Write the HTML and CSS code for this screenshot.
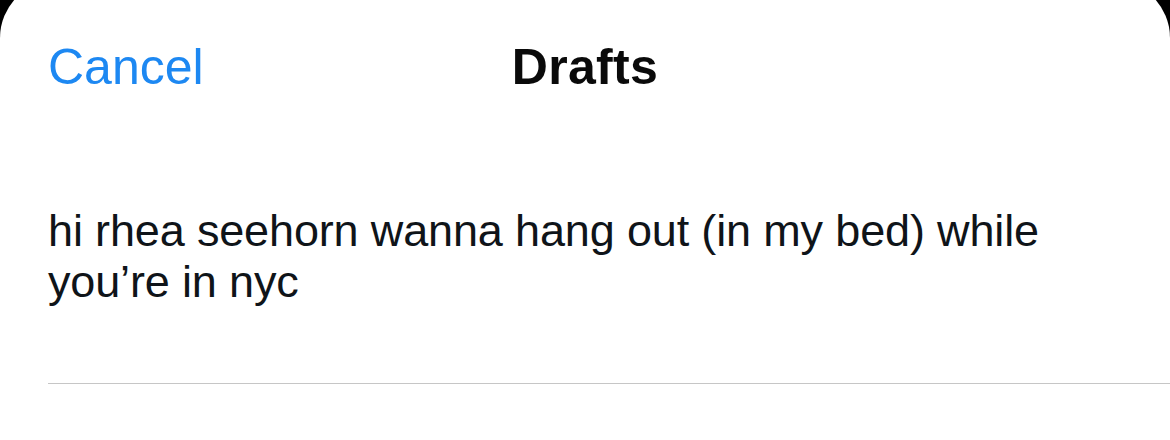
FILE: index.html
```html
<!DOCTYPE html>
<html lang="en">
<head>
<meta charset="utf-8">
<title>Drafts</title>
<link rel="stylesheet" href="styles.css">
</head>
<body>
<div class="sheet">
  <header class="nav">
    <span class="cancel">Cancel</span>
    <h1 class="title">Drafts</h1>
    <span class="spacer"></span>
  </header>
  <ul class="drafts">
    <li class="draft">
      <p class="draft-text">hi rhea seehorn wanna hang out (in my bed) while you’re in nyc</p>
    </li>
  </ul>
</div>
</body>
</html>
```
FILE: styles.css
```css
html, body {
  margin: 0;
  padding: 0;
  background: #000;
  height: 100%;
  overflow: hidden;
}
body {
  font-family: "Liberation Sans", Arial, sans-serif;
}
.sheet {
  margin-top: -20px;
  background: #fff;
  border-radius: 58px 58px 0 0;
  height: 480px;
}
.nav {
  display: grid;
  grid-template-columns: 1fr auto 1fr;
  align-items: center;
  padding: 57px 48px 0 48px;
  height: 60px;
}
.cancel {
  font-size: 50px;
  line-height: 60px;
  color: #1d88f2;
  justify-self: start;
}
.title {
  margin: 0;
  font-size: 50px;
  line-height: 60px;
  font-weight: 700;
  letter-spacing: 0.3px;
  color: #0a0a0a;
}
.drafts {
  list-style: none;
  margin: 0;
  padding: 0 0 0 48px;
}
.draft {
  padding: 108px 48px 76px 0;
  border-bottom: 1px solid #c6c6c6;
}
.draft-text {
  margin: 0;
  font-size: 45px;
  line-height: 51px;
  letter-spacing: -0.15px;
  color: #0f1419;
}
```
